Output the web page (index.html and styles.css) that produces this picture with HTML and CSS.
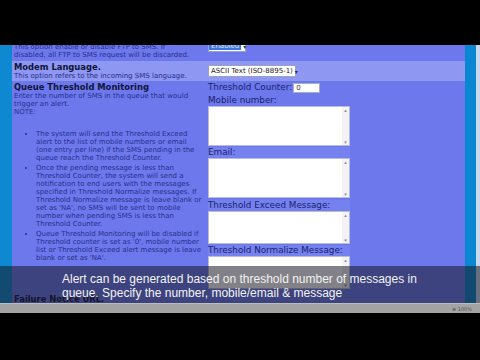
FILE: index.html
```html
<!DOCTYPE html>
<html>
<head>
<meta charset="utf-8">
<link rel="stylesheet" href="styles.css">
</head>
<body>
<div class="screen">
  <div class="letterbox-top"></div>
  <div class="viewport">
    <div class="edge-left"></div>
    <div class="page">
      <div class="row row-ftp">
        <div class="cell-left">
          <div class="desc">This option enable or disable FTP to SMS. If<br>disabled, all FTP to SMS request will be discarded.</div>
        </div>
        <div class="cell-right">
          <div class="select select-ftp"><span class="sel-hl">Enabled</span><span class="arrow">▾</span></div>
        </div>
      </div>
      <div class="row row-modem">
        <div class="cell-left">
          <div class="title">Modem Language.</div>
          <div class="desc">This option refers to the incoming SMS language.</div>
        </div>
        <div class="cell-right">
          <div class="select select-lang"><span>ASCII Text (ISO-8895-1)</span><span class="arrow">▾</span></div>
        </div>
      </div>
      <div class="row row-queue">
        <div class="cell-left">
          <div class="title">Queue Threshold Monitoring</div>
          <div class="desc">Enter the number of SMS in the queue that would<br>trigger an alert.<br>NOTE:</div>
          <ul class="notes">
            <li>The system will send the Threshold Exceed<br>alert to the list of mobile numbers or email<br>(one entry per line) if the SMS pending in the<br>queue reach the Threshold Counter.</li>
            <li>Once the pending message is less than<br>Threshold Counter, the system will send a<br>notification to end users with the messages<br>specified in Threshold Normalize messages. If<br>Threshold Normalize message is leave blank or<br>set as 'NA', no SMS will be sent to mobile<br>number when pending SMS is less than<br>Threshold Counter.</li>
            <li>Queue Threshold Monitoring will be disabled if<br>Threshold counter is set as '0', mobile number<br>list or Threshold Exceed alert message is leave<br>blank or set as 'NA'.</li>
          </ul>
        </div>
        <div class="cell-right">
          <div class="counter"><span class="label-inline">Threshold Counter:</span><span class="input">0</span></div>
          <div class="label label-first">Mobile number:</div>
          <div class="ta ta-tall"><div class="ta-body"></div><div class="ta-scroll"><span>▴</span><span>▾</span></div></div>
          <div class="label">Email:</div>
          <div class="ta ta-tall"><div class="ta-body"></div><div class="ta-scroll"><span>▴</span><span>▾</span></div></div>
          <div class="label label-gap">Threshold Exceed Message:</div>
          <div class="ta ta-short"><div class="ta-body"></div><div class="ta-scroll"><span>▴</span><span>▾</span></div></div>
          <div class="label">Threshold Normalize Message:</div>
          <div class="ta ta-short"><div class="ta-body"></div><div class="ta-scroll"><span>▴</span><span>▾</span></div></div>
        </div>
      </div>
      <div class="row row-failure">
        <div class="cell-left">
          <div class="title">Failure Notice URL.</div>
        </div>
        <div class="cell-right"></div>
      </div>
    </div>
    <div class="edge-right"></div>
    <div class="rim"></div>
    <div class="caption">
      <div class="caption-text">Alert can be generated based on threshold number of messages in<br>queue. Specify the number, mobile/email &amp; message</div>
    </div>
  </div>
  <div class="statusbar"><span class="zoom">⊕ 100%</span></div>
  <div class="letterbox-bottom"></div>
</div>
</body>
</html>
```
FILE: styles.css
```css
html, body {
  margin: 0;
  padding: 0;
  background: #000;
}
.screen {
  width: 480px;
  height: 360px;
  display: flex;
  flex-direction: column;
  background: #000;
  overflow: hidden;
}
.letterbox-top {
  height: 45px;
  flex: none;
  background: #000;
}
.viewport {
  position: relative;
  height: 258px;
  flex: none;
  display: flex;
  overflow: hidden;
  background: #6c78ec;
}
.edge-left {
  width: 12px;
  flex: none;
  background: #0f88d2;
}
.edge-right {
  width: 11px;
  flex: none;
  background: #0b86d0;
}
.rim {
  width: 4px;
  flex: none;
  background: #c9d8ee;
}
.page {
  width: 453px;
  flex: none;
  font-family: "DejaVu Sans", Verdana, sans-serif;
  color: #2a2f8c;
}
.row {
  display: grid;
  grid-template-columns: 196px 1fr;
}
.cell-left {
  padding-left: 2px;
}
.title {
  font-weight: bold;
  font-size: 8.4px;
  line-height: 9px;
  color: #12143a;
  white-space: nowrap;
}
.desc {
  font-size: 7px;
  line-height: 8px;
  white-space: nowrap;
}
.row-ftp {
  margin-top: -2px;
  height: 18px;
}
.select {
  display: flex;
  align-items: center;
  background: #fff;
  border: 1px solid #9aa0c8;
  box-sizing: border-box;
  font-size: 7px;
  color: #222;
  white-space: nowrap;
}
.select .arrow {
  font-size: 6px;
  margin-left: auto;
  padding: 0 2px;
  color: #333;
}
.select-ftp {
  width: 38px;
  height: 11px;
  margin-top: -2px;
}
.sel-hl {
  background: #3f76e2;
  color: #dfe8ff;
  padding: 0 2px;
  line-height: 7px;
}
.row-modem {
  height: 20px;
  background: #8e97f1;
}
.row-modem .cell-left {
  padding-top: 2px;
}
.select-lang {
  width: 88px;
  height: 12px;
  margin-top: 4px;
  padding-left: 2px;
}
.row-queue .cell-left {
  padding-top: 2px;
}
.notes {
  margin: 14px 0 0 0;
  padding-left: 22px;
  font-size: 7px;
  line-height: 8px;
  white-space: nowrap;
}
.notes li {
  margin-bottom: 2px;
}
.cell-right {
  display: flex;
  flex-direction: column;
  align-items: flex-start;
  padding-bottom: 4px;
}
.counter {
  display: flex;
  align-items: center;
  height: 11px;
  margin-top: 1px;
}
.label-inline, .label {
  font-size: 8.8px;
  line-height: 11px;
  color: #1b1f6e;
  white-space: nowrap;
}
.input {
  width: 27px;
  height: 10px;
  box-sizing: border-box;
  background: #fff;
  border: 1px solid #a6abd0;
  font-size: 7px;
  line-height: 8px;
  color: #333;
  padding-left: 2px;
  margin-left: 1px;
}
.label {
  width: 142px;
  height: 11px;
  background: #7581ee;
  margin-top: 1px;
}
.label-first {
  margin-top: 2px;
  background: transparent;
}
.label-gap {
  margin-top: 2px;
}
.ta {
  width: 142px;
  box-sizing: border-box;
  display: flex;
  background: #fff;
  border: 1px solid #b9bcd6;
}
.ta-tall {
  height: 40px;
}
.ta-short {
  height: 33px;
}
.ta-body {
  flex: 1;
}
.ta-scroll {
  width: 7px;
  display: flex;
  flex-direction: column;
  justify-content: space-between;
  align-items: center;
  background: #f3f3f6;
  font-size: 5px;
  line-height: 6px;
  color: #8a8a9a;
}
.row-failure .cell-left {
  padding-top: 2px;
}
.caption {
  position: absolute;
  left: 0;
  right: 0;
  bottom: 0;
  height: 37px;
  background: rgba(22, 22, 34, 0.54);
  box-sizing: border-box;
  padding: 6px 0 0 62px;
}
.caption-text {
  font-family: "Liberation Sans", Arial, sans-serif;
  font-size: 12px;
  line-height: 14px;
  color: #f2f2f2;
  white-space: nowrap;
}
.statusbar {
  height: 10px;
  flex: none;
  background: #a3a3a3;
  border-top: 1px solid #bcbcbc;
  box-sizing: border-box;
  display: flex;
  justify-content: flex-end;
  align-items: center;
  padding-right: 8px;
}
.zoom {
  font-family: "DejaVu Sans", sans-serif;
  font-size: 5px;
  color: #555;
}
.letterbox-bottom {
  flex: 1;
  background: #000;
}
```
